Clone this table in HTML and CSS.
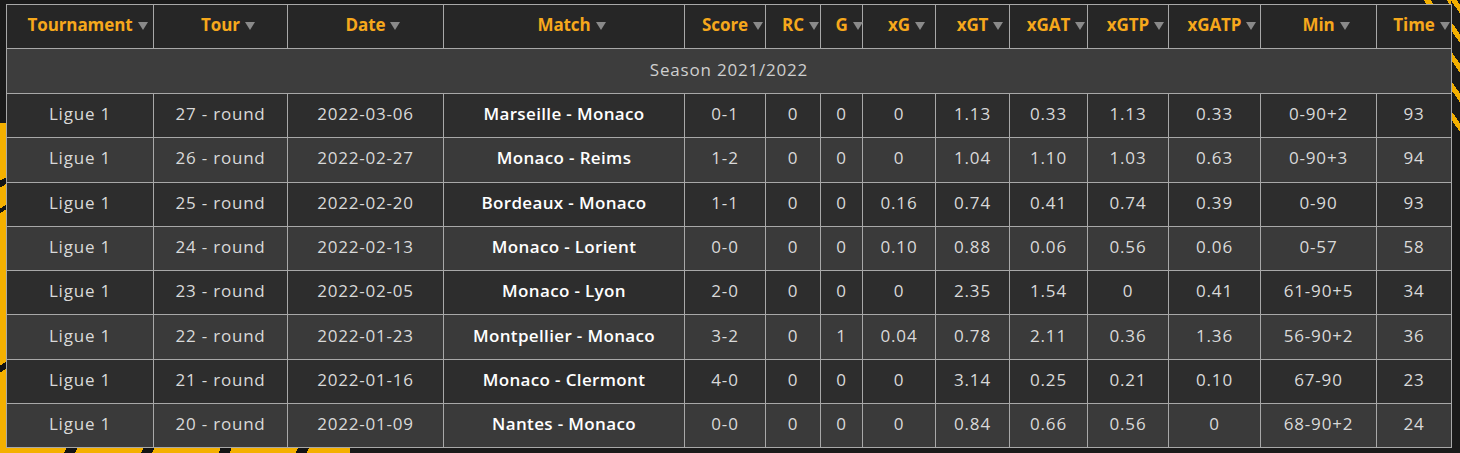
FILE: index.html
```html
<!DOCTYPE html>
<html>
<head>
<meta charset="utf-8">
<link rel="stylesheet" href="styles.css">
</head>
<body>
<table class="stats">
  <colgroup>
    <col style="width:147px"><col style="width:134px"><col style="width:156px"><col style="width:241px">
    <col style="width:81px"><col style="width:55px"><col style="width:42px"><col style="width:73px">
    <col style="width:74px"><col style="width:78px"><col style="width:81px"><col style="width:92px">
    <col style="width:116px"><col style="width:75px">
  </colgroup>
  <thead>
    <tr>
      <th><span class="h">Tournament</span></th>
      <th><span class="h">Tour</span></th>
      <th><span class="h">Date</span></th>
      <th><span class="h">Match</span></th>
      <th><span class="h">Score</span></th>
      <th><span class="h">RC</span></th>
      <th><span class="h">G</span></th>
      <th><span class="h">xG</span></th>
      <th><span class="h">xGT</span></th>
      <th><span class="h">xGAT</span></th>
      <th><span class="h">xGTP</span></th>
      <th><span class="h">xGATP</span></th>
      <th><span class="h">Min</span></th>
      <th><span class="h">Time</span></th>
    </tr>
  </thead>
  <tbody>
    <tr class="season"><td colspan="14">Season 2021/2022</td></tr>
    <tr class="odd"><td>Ligue 1</td><td>27 - round</td><td>2022-03-06</td><td class="match">Marseille - Monaco</td><td>0-1</td><td>0</td><td>0</td><td>0</td><td>1.13</td><td>0.33</td><td>1.13</td><td>0.33</td><td>0-90+2</td><td>93</td></tr>
    <tr class="even"><td>Ligue 1</td><td>26 - round</td><td>2022-02-27</td><td class="match">Monaco - Reims</td><td>1-2</td><td>0</td><td>0</td><td>0</td><td>1.04</td><td>1.10</td><td>1.03</td><td>0.63</td><td>0-90+3</td><td>94</td></tr>
    <tr class="odd"><td>Ligue 1</td><td>25 - round</td><td>2022-02-20</td><td class="match">Bordeaux - Monaco</td><td>1-1</td><td>0</td><td>0</td><td>0.16</td><td>0.74</td><td>0.41</td><td>0.74</td><td>0.39</td><td>0-90</td><td>93</td></tr>
    <tr class="even"><td>Ligue 1</td><td>24 - round</td><td>2022-02-13</td><td class="match">Monaco - Lorient</td><td>0-0</td><td>0</td><td>0</td><td>0.10</td><td>0.88</td><td>0.06</td><td>0.56</td><td>0.06</td><td>0-57</td><td>58</td></tr>
    <tr class="odd"><td>Ligue 1</td><td>23 - round</td><td>2022-02-05</td><td class="match">Monaco - Lyon</td><td>2-0</td><td>0</td><td>0</td><td>0</td><td>2.35</td><td>1.54</td><td>0</td><td>0.41</td><td>61-90+5</td><td>34</td></tr>
    <tr class="even"><td>Ligue 1</td><td>22 - round</td><td>2022-01-23</td><td class="match">Montpellier - Monaco</td><td>3-2</td><td>0</td><td>1</td><td>0.04</td><td>0.78</td><td>2.11</td><td>0.36</td><td>1.36</td><td>56-90+2</td><td>36</td></tr>
    <tr class="odd"><td>Ligue 1</td><td>21 - round</td><td>2022-01-16</td><td class="match">Monaco - Clermont</td><td>4-0</td><td>0</td><td>0</td><td>0</td><td>3.14</td><td>0.25</td><td>0.21</td><td>0.10</td><td>67-90</td><td>23</td></tr>
    <tr class="even"><td>Ligue 1</td><td>20 - round</td><td>2022-01-09</td><td class="match">Nantes - Monaco</td><td>0-0</td><td>0</td><td>0</td><td>0</td><td>0.84</td><td>0.66</td><td>0.56</td><td>0</td><td>68-90+2</td><td>24</td></tr>
  </tbody>
</table>
</body>
</html>
```
FILE: styles.css
```css
html {
  background: #1a1a1a;
}
body {
  margin: 0;
  padding: 4px 0 0 6px;
  min-height: 453px;
  box-sizing: border-box;
  font-family: "Open Sans", "Lato", sans-serif;
  background-image:
    linear-gradient(150deg, transparent 0 50px, #141414 50px 56px, transparent 56px 74px, #141414 74px 78px, transparent 78px 210px, #141414 210px 216px, transparent 216px),
    linear-gradient(#f4b000, #f4b000),
    repeating-linear-gradient(115deg, #f4b000 0 60px, #141414 60px 70px),
    repeating-linear-gradient(55deg, #1a1a1a 0 12px, #f4b000 12px 17px),
    repeating-linear-gradient(60deg, #1a1a1a 0 14px, #f4b000 14px 20px);
  background-size: 6px 330px, 6px 330px, 350px 6px, 9px 140px, 50px 4px;
  background-position: 0 123px, 0 123px, 0 448px, right 0 top 0, right 0 top 0;
  background-repeat: no-repeat;
}
.stats {
  width: 1445px;
  border-collapse: collapse;
  table-layout: fixed;
  border: 1px solid #a8a8a8;
}
.stats th,
.stats td {
  border: 1px solid #a8a8a8;
  text-align: center;
  padding: 0 0 4px;
  white-space: nowrap;
}
.stats th {
  height: 39px;
  background: #262626;
  color: #f6a81c;
  font-weight: 700;
  font-size: 17px;
  letter-spacing: -0.1px;
}
.h {
  position: relative;
}
.h::after {
  content: "";
  position: absolute;
  left: calc(100% + 5px);
  top: 50%;
  margin-top: -3px;
  border-left: 5px solid transparent;
  border-right: 5px solid transparent;
  border-top: 8px solid #8a8a8a;
}
.stats td {
  height: 39.3px;
  color: #d9d9d9;
  font-size: 17px;
  letter-spacing: 0.8px;
}
.season td {
  height: 40px;
  background: #3d3d3d;
  color: #cfcfcf;
}
.odd td {
  background: #2d2d2d;
}
.even td {
  background: #3a3a3a;
}
.stats td.match {
  color: #ffffff;
  font-weight: 600;
  letter-spacing: 0.35px;
}
```
